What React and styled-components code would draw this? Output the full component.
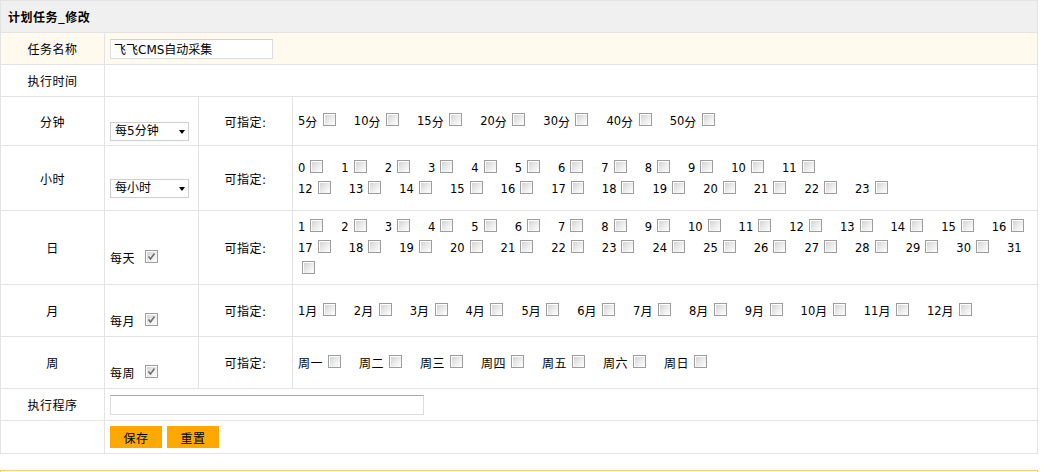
import React from 'react';
import styled, { createGlobalStyle } from 'styled-components';

const GlobalStyle = createGlobalStyle`
  body {
    margin: 0;
    background: #fff;
    color: #000;
    font-family: "DejaVu Sans", "Noto Sans CJK SC", sans-serif;
    font-size: 12px;
  }
`;

const Table = styled.table`
  width: 1038px;
  border-collapse: collapse;
  table-layout: fixed;
`;

const Row = styled.tr`
  height: ${(p) => p.$h}px;
  background: ${(p) => p.$bg || '#fff'};
`;

const HeadCell = styled.th`
  border: 1px solid #e3e3e3;
  background: #f0f0f0;
  text-align: left;
  padding: 0 7px;
  font-family: "Noto Sans CJK SC", sans-serif;
  font-size: 12px;
  font-weight: bold;
  letter-spacing: 0.5px;
`;

const LabelCell = styled.td`
  border: 1px solid #e3e3e3;
  text-align: center;
  padding: 0;
  letter-spacing: 0.5px;
`;

const Cell = styled.td`
  border: 1px solid #e3e3e3;
  padding: 0 5px;
  vertical-align: middle;
`;

const Field = styled.div`
  padding-top: 20px;
  display: flex;
  align-items: center;
  height: 19px;
  gap: 6px;
  letter-spacing: 0.5px;
`;

const SelectWrap = styled.div`
  position: relative;
  width: 79px;
  height: 19px;
`;

const Select = styled.select`
  appearance: none;
  width: 79px;
  height: 19px;
  box-sizing: border-box;
  border: 1px solid #cfcfcf;
  background: #fff;
  padding: 0 0 0 4px;
  font: inherit;
  font-size: 12px;
  color: #000;
  outline: none;
`;

const Arrow = styled.span`
  position: absolute;
  right: 4px;
  top: 8px;
  width: 0;
  height: 0;
  border-left: 3.5px solid transparent;
  border-right: 3.5px solid transparent;
  border-top: 4px solid #000;
  pointer-events: none;
`;

const Lines = styled.div`
  display: flex;
  flex-direction: column;
`;

const Line = styled.div`
  display: flex;
  align-items: center;
  height: 21px;
  white-space: nowrap;
`;

const Opt = styled.span`
  display: inline-flex;
  align-items: center;
  margin-right: 18px;
  font-size: 11.5px;
`;

const Unit = styled.span`
  font-size: 12px;
  letter-spacing: 0.5px;
`;

const Box = styled.span`
  display: inline-block;
  width: 13px;
  height: 13px;
  box-sizing: border-box;
  margin-left: ${(p) => (p.$flush ? 4 : 5)}px;
  margin-bottom: 3px;
  border: 1px solid #9d9d9d;
  box-shadow: inset 1px 1px 0 #fff;
  background: linear-gradient(135deg, #cfcfcf 0%, #ececec 55%, #fff 100%);
`;

const TextInput = styled.input`
  width: ${(p) => p.$w}px;
  height: 20px;
  box-sizing: border-box;
  border: 1px solid #dcdcdc;
  border-top-color: ${(p) => (p.$dark ? '#a8a8a8' : '#d0d0d0')};
  padding: 0 3px;
  font: inherit;
  font-size: 12px;
  color: #000;
  background: #fff;
  display: block;
  outline: none;
`;

const Buttons = styled.div`
  display: flex;
  gap: 5px;
`;

const Button = styled.button`
  width: 52px;
  height: 22px;
  border: none;
  background: #ffa900;
  color: #000;
  font: inherit;
  font-size: 12px;
  letter-spacing: 0.5px;
  padding: 0;
  cursor: pointer;
`;

const Footer = styled.div`
  margin-top: 16px;
  width: 1038px;
  height: 20px;
  box-sizing: border-box;
  border: 1px solid #ffcb70;
`;

function CheckBox({ checked, flush }) {
  return (
    <Box $flush={flush}>
      {checked && (
        <svg width="11" height="11" viewBox="0 0 11 11" style={{ display: 'block' }}>
          <path d="M2.5 5.5 L4.5 8 L8.5 2.5" fill="none" stroke="#6f6f6f" strokeWidth="1.6" />
        </svg>
      )}
    </Box>
  );
}

function Options({ lines }) {
  return (
    <Lines>
      {lines.map((line, i) => (
        <Line key={i}>
          {line.map((it, j) =>
            it.blank ? (
              <CheckBox key={j} flush />
            ) : (
              <Opt key={j}>
                {it.num}
                {it.unit && <Unit>{it.unit}</Unit>}
                {it.box !== false && <CheckBox />}
              </Opt>
            )
          )}
        </Line>
      ))}
    </Lines>
  );
}

const range = (a, b, unit) =>
  Array.from({ length: b - a + 1 }, (_, i) => ({ num: `${a + i}`, unit }));

const minuteLines = [[5, 10, 15, 20, 30, 40, 50].map((m) => ({ num: `${m}`, unit: '分' }))];
const hourLines = [range(0, 11), range(12, 23)];
const dayLines = [range(1, 16), [...range(17, 30), { num: '31', box: false }], [{ blank: true }]];
const monthLines = [range(1, 12, '月')];
const weekLines = [['周一', '周二', '周三', '周四', '周五', '周六', '周日'].map((w) => ({ unit: w }))];

function Select5({ value }) {
  return (
    <SelectWrap>
      <Select defaultValue={value}>
        <option>{value}</option>
      </Select>
      <Arrow />
    </SelectWrap>
  );
}

export default function App() {
  const rows = [
    { name: '分钟', h: 49, field: <Select5 value="每5分钟" />, lines: minuteLines },
    { name: '小时', h: 65, field: <Select5 value="每小时" />, lines: hourLines },
    { name: '日', h: 74, field: <>每天<CheckBox checked flush /></>, lines: dayLines },
    { name: '月', h: 52, field: <>每月<CheckBox checked flush /></>, lines: monthLines },
    { name: '周', h: 52, field: <>每周<CheckBox checked flush /></>, lines: weekLines },
  ];

  return (
    <>
      <GlobalStyle />
      <Table>
        <colgroup>
          <col style={{ width: 104 }} />
          <col style={{ width: 94 }} />
          <col style={{ width: 94 }} />
          <col />
        </colgroup>
        <tbody>
          <Row $h={32}>
            <HeadCell colSpan={4}>计划任务_修改</HeadCell>
          </Row>
          <Row $h={32} $bg="#fff9ee">
            <LabelCell>任务名称</LabelCell>
            <Cell colSpan={3}>
              <TextInput $w={163} defaultValue="飞飞CMS自动采集" />
            </Cell>
          </Row>
          <Row $h={32}>
            <LabelCell>执行时间</LabelCell>
            <Cell colSpan={3} />
          </Row>
          {rows.map((r) => (
            <Row $h={r.h} key={r.name}>
              <LabelCell>{r.name}</LabelCell>
              <Cell>
                <Field>{r.field}</Field>
              </Cell>
              <LabelCell>可指定:</LabelCell>
              <Cell>
                <Options lines={r.lines} />
              </Cell>
            </Row>
          ))}
          <Row $h={32}>
            <LabelCell>执行程序</LabelCell>
            <Cell colSpan={3}>
              <TextInput $w={314} $dark />
            </Cell>
          </Row>
          <Row $h={33}>
            <LabelCell />
            <Cell colSpan={3}>
              <Buttons>
                <Button>保存</Button>
                <Button>重置</Button>
              </Buttons>
            </Cell>
          </Row>
        </tbody>
      </Table>
      <Footer />
    </>
  );
}
